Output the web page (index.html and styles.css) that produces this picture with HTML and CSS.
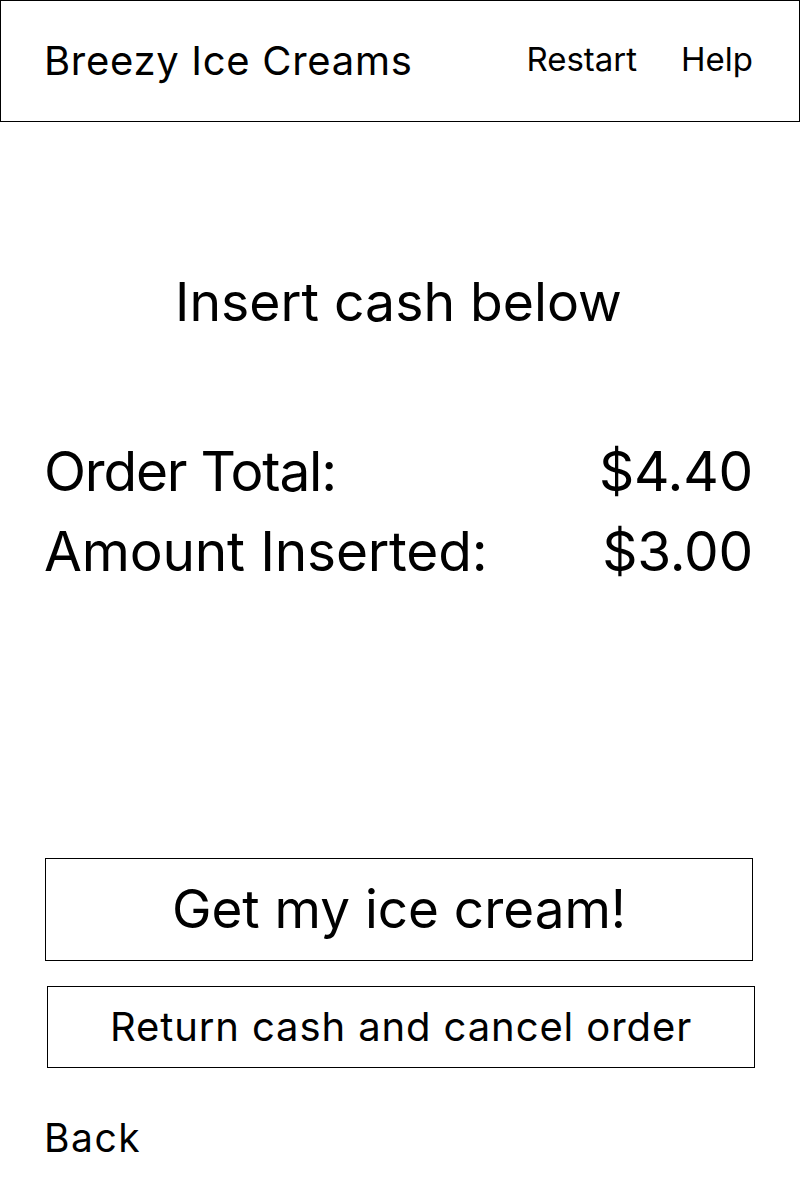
FILE: index.html
```html
<!DOCTYPE html>
<html lang="en">
<head>
<meta charset="utf-8">
<title>Breezy Ice Creams</title>
<link rel="stylesheet" href="styles.css">
</head>
<body>
<header class="topbar">
  <div class="brand">Breezy Ice Creams</div>
  <nav class="nav">
    <a class="nav-link">Restart</a>
    <a class="nav-link">Help</a>
  </nav>
</header>
<main class="content">
  <h1 class="heading">Insert cash below</h1>
  <div class="summary">
    <div class="row"><span class="label label-tight">Order Total:</span><span>$4.40</span></div>
    <div class="row"><span class="label">Amount Inserted:</span><span>$3.00</span></div>
  </div>
  <div class="actions">
    <button class="btn btn-primary">Get my ice cream!</button>
    <button class="btn btn-secondary">Return cash and cancel order</button>
  </div>
  <a class="back">Back</a>
</main>
</body>
</html>
```
FILE: styles.css
```css
* { box-sizing: border-box; }
html, body { margin: 0; padding: 0; background: #fff; }
body {
  font-family: Inter, "Open Sans", "Liberation Sans", sans-serif;
  color: #000;
  width: 800px;
  height: 1200px;
}
.topbar {
  height: 122px;
  border: 1px solid #000;
  display: flex;
  align-items: center;
  justify-content: space-between;
  padding: 0 46px 0 43px;
}
.brand { font-size: 40px; line-height: 1; letter-spacing: 0.7px; }
.nav { display: flex; gap: 44px; padding-bottom: 4px; }
.nav-link { font-size: 33px; line-height: 1; }
.content {
  padding: 0 47px 0 44px;
  display: flex;
  flex-direction: column;
}
.heading {
  font-weight: 400;
  font-size: 53.5px;
  line-height: 1;
  text-align: center;
  margin: 153px 0 0;
}
.summary { margin-top: 114px; display: flex; flex-direction: column; gap: 24px; }
.row {
  display: flex;
  justify-content: space-between;
  font-size: 55px;
  line-height: 56px;
  letter-spacing: -0.2px;
}
.label-tight { letter-spacing: -1.2px; }
.actions { margin-top: 279px; display: flex; flex-direction: column; gap: 25px; }
.btn {
  font-family: inherit;
  color: #000;
  background: #fff;
  border: 1px solid #000;
  border-radius: 0;
  padding: 0;
  width: 708px;
}
.btn-primary { height: 103px; font-size: 53px; margin-left: 1px; }
.btn-secondary { height: 82px; font-size: 40px; letter-spacing: 0.9px; margin-left: 3px; }
.back { font-size: 39px; line-height: 1; letter-spacing: 1.5px; margin-top: 50px; }
```
